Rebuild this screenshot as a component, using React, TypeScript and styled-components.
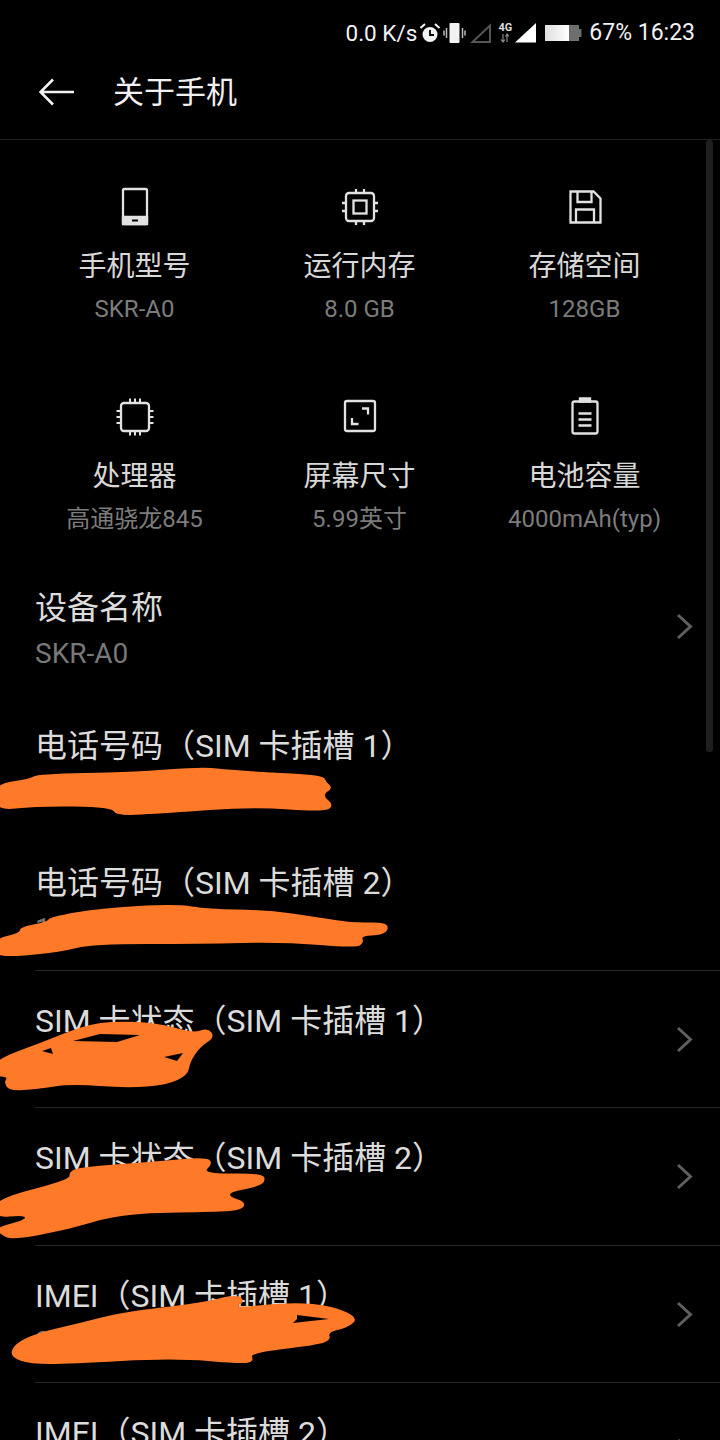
import React from "react";
import styled, { createGlobalStyle } from "styled-components";

const GlobalStyle = createGlobalStyle`
  html, body {
    margin: 0;
    padding: 0;
    background: #000;
  }
  body {
    font-family: Roboto, "Noto Sans CJK SC", sans-serif;
  }
`;

const Page = styled.div`
  position: relative;
  width: 720px;
  height: 1440px;
  overflow: hidden;
  background: #000;
`;

const StatusBar = styled.div`
  height: 48px;
  padding: 17px 25px 0 0;
  box-sizing: border-box;
  display: flex;
  align-items: center;
  justify-content: flex-end;
  color: #f2f2f2;
`;

const StatusText = styled.span<{ $left?: number; $size: number }>`
  margin-left: ${(p) => p.$left ?? 0}px;
  font-size: ${(p) => p.$size}px;
  line-height: 28px;
  white-space: nowrap;
`;

const StatusIcon = styled.svg<{ $left?: number }>`
  display: block;
  flex: none;
  margin-left: ${(p) => p.$left ?? 0}px;
`;

const NetStack = styled.div`
  width: 14px;
  margin-left: 7px;
  display: flex;
  flex-direction: column;
  align-items: center;
`;

const NetLabel = styled.span`
  font-size: 11px;
  font-weight: 700;
  line-height: 10px;
  color: #ddd;
`;

const Toolbar = styled.header`
  height: 92px;
  box-sizing: border-box;
  padding: 0 0 8px 39px;
  display: flex;
  align-items: center;
  border-bottom: 1px solid #222;
`;

const BackIcon = styled.svg`
  display: block;
  flex: none;
  margin: 4px 38px 0 0;
`;

const PageTitle = styled.h1`
  margin: 0;
  font-size: 31px;
  font-weight: 400;
  color: #f0f0f0;
`;

const SpecGrid = styled.section`
  height: 417px;
  box-sizing: border-box;
  padding: 0 22px;
  display: grid;
  grid-template-columns: repeat(3, 225px);
  grid-auto-rows: 210px;
`;

const SpecCell = styled.div`
  padding-top: 44px;
  display: flex;
  flex-direction: column;
  align-items: center;
`;

const SpecIcon = styled.svg`
  display: block;
  width: 44px;
  height: 44px;
  fill: none;
  stroke: #e2e2e2;
  stroke-width: 2.3;
`;

const SpecLabel = styled.div`
  margin-top: 21px;
  font-size: 28px;
  line-height: 36px;
  color: #d8d8d8;
`;

const SpecValue = styled.div`
  margin-top: 8px;
  font-size: 24px;
  line-height: 32px;
  color: #7c7c7c;
  white-space: nowrap;
`;

const InfoRow = styled.div<{ $divided?: boolean }>`
  position: relative;
  height: 137.5px;
  box-sizing: border-box;
  margin-left: 35px;
  padding-top: 29px;
  border-top: 1px solid ${(p) => (p.$divided ? "#262626" : "transparent")};
`;

const RowTitle = styled.div`
  font-size: 32px;
  line-height: 42px;
  color: #dcdcdc;
  white-space: nowrap;
`;

const RowValue = styled.div`
  margin-top: 3px;
  font-size: 28px;
  line-height: 44px;
  color: #787878;
`;

const Chevron = styled.svg`
  position: absolute;
  right: 27px;
  top: 55px;
  width: 17px;
  height: 27px;
  fill: none;
  stroke: #5f5f5f;
  stroke-width: 3;
`;

const ScrollThumb = styled.div`
  position: absolute;
  left: 706px;
  top: 140px;
  width: 7px;
  height: 612px;
  border-radius: 3px;
  background: #1f1f1f;
`;

const Scribbles = styled.svg`
  position: absolute;
  left: 0;
  top: 0;
  pointer-events: none;
`;

type Pt = [number, number];

// closed outline, smoothed through the midpoints so the marker edge stays soft
const smooth = (pts: Pt[]) => {
  const mid = (a: Pt, b: Pt): Pt => [(a[0] + b[0]) / 2, (a[1] + b[1]) / 2];
  const start = mid(pts[pts.length - 1], pts[0]);
  let d = `M${start[0]} ${start[1]}`;
  pts.forEach((p, i) => {
    const m = mid(p, pts[(i + 1) % pts.length]);
    d += `Q${p[0]} ${p[1]} ${m[0]} ${m[1]}`;
  });
  return d + "Z";
};

const marks: Pt[][] = [
  [
    [-6, 784], [30, 779], [37, 774], [133, 772], [200, 767], [222, 769], [260, 772], [323, 775], [326, 782],
    [333, 788], [322, 795], [334, 805], [325, 812], [253, 807], [167, 813], [116, 816], [112, 807], [37, 806], [-6, 811]
  ],
  [
    [-6, 939], [20, 933], [20, 927], [47, 922], [50, 917], [100, 908], [177, 904], [207, 909], [267, 910], [317, 917],
    [353, 923], [385, 922], [389, 929], [382, 935], [361, 936], [364, 942], [357, 948], [283, 942], [200, 944],
    [93, 944], [60, 952], [10, 957], [-6, 954]
  ],
  [
    [-6, 1060], [43, 1042], [90, 1023], [133, 1021], [167, 1025], [193, 1033], [208, 1028], [215, 1037], [200, 1047],
    [190, 1062], [188, 1075], [167, 1085], [127, 1088], [72, 1084], [37, 1089], [9, 1091], [4, 1082], [8, 1077], [-6, 1076]
  ],
  [
    [-6, 1199], [70, 1180], [69, 1172], [80, 1167], [150, 1162], [206, 1157], [213, 1163], [202, 1174], [262, 1173],
    [266, 1181], [257, 1187], [230, 1192], [230, 1197], [246, 1202], [241, 1211], [200, 1212], [120, 1214],
    [67, 1230], [12, 1240], [2, 1235], [-6, 1228], [25, 1220], [25, 1215], [-6, 1218]
  ],
  [
    [10, 1357], [14, 1344], [37, 1333], [80, 1323], [123, 1312], [200, 1303], [238, 1294], [245, 1302], [233, 1308],
    [293, 1302], [333, 1306], [359, 1318], [347, 1328], [328, 1332], [331, 1340], [317, 1345], [250, 1353], [254, 1361],
    [243, 1364], [173, 1358], [70, 1364], [30, 1364]
  ]
];

const holes = [
  "73,1041 117,1042 140,1035 100,1034",
  "164,1057 177,1061 183,1053",
  "42,1051 51,1048 53,1054",
  "297,1315 329,1319 293,1323 297,1319"
];

const PhoneGlyph = () => (
  <SpecIcon viewBox="0 0 44 44">
    <rect x="10" y="5" width="24" height="35" rx="1.500" />
    <path d="M10 33h24v7H10z" fill="#e2e2e2" />
    <rect x="19" y="35.500" width="6" height="2" fill="#000" stroke="none" />
  </SpecIcon>
);

const RamGlyph = () => (
  <SpecIcon viewBox="0 0 44 44">
    <rect x="8" y="9" width="28" height="28" rx="3" />
    <rect x="15.500" y="16.500" width="13" height="13" />
    <path d="M18 5v4M26 5v4M18 37v4M26 37v4M4 19h4M4 27h4M36 19h4M36 27h4" />
  </SpecIcon>
);

const DiskGlyph = () => (
  <SpecIcon viewBox="0 0 44 44">
    <path d="M7.500 7.500h23l7 7v24h-30z" />
    <path d="M14.500 8v10h14V8M13 38V25.500h18V38" />
  </SpecIcon>
);

const ChipGlyph = () => (
  <SpecIcon viewBox="0 0 44 44">
    <rect x="8" y="9" width="28" height="28" rx="3" />
    <path d="M17 4.500V9M22 4.500V9M27 4.500V9M17 37v4.500M22 37v4.500M27 37v4.500M3.500 17H8M3.500 23H8M3.500 29H8M36 17h4.500M36 23h4.500M36 29h4.500" strokeWidth="2" />
  </SpecIcon>
);

const ScreenGlyph = () => (
  <SpecIcon viewBox="0 0 44 44">
    <rect x="7" y="7" width="30" height="30" rx="2" />
    <path d="M24 14.500h6v6M14 24v6h6.500" />
  </SpecIcon>
);

const BatteryGlyph = () => (
  <SpecIcon viewBox="0 0 44 44">
    <rect x="9.500" y="7.500" width="25" height="32" rx="2" />
    <path d="M17 4.500h10v3H17z" fill="#e2e2e2" />
    <path d="M15.500 19.500h13M15.500 25.500h13M15.500 31.500h13" />
  </SpecIcon>
);

const specs = [
  { icon: <PhoneGlyph />, label: "手机型号", value: "SKR-A0" },
  { icon: <RamGlyph />, label: "运行内存", value: "8.0 GB" },
  { icon: <DiskGlyph />, label: "存储空间", value: "128GB" },
  { icon: <ChipGlyph />, label: "处理器", value: "高通骁龙845" },
  { icon: <ScreenGlyph />, label: "屏幕尺寸", value: "5.99英寸" },
  { icon: <BatteryGlyph />, label: "电池容量", value: "4000mAh(typ)" }
];

const rows = [
  { title: "设备名称", value: "SKR-A0", more: true },
  { title: "电话号码（SIM 卡插槽 1）", value: "1" },
  { title: "电话号码（SIM 卡插槽 2）", value: "1" },
  { title: "SIM 卡状态（SIM 卡插槽 1）", value: "1", more: true, divided: true },
  { title: "SIM 卡状态（SIM 卡插槽 2）", value: "1", more: true, divided: true },
  { title: "IMEI（SIM 卡插槽 1）", value: "8", more: true, divided: true },
  { title: "IMEI（SIM 卡插槽 2）", value: "8", more: true, divided: true }
];

const App = () => {
  return (
    <Page>
      <GlobalStyle />
      <StatusBar>
        <StatusText $size={22.5}>0.0 K/s</StatusText>
        <StatusIcon $left={3} width="20" height="22" viewBox="0 0 20 22">
          <circle cx="10" cy="12.500" r="7.500" fill="#f2f2f2" />
          <path d="M10 8v5h4" fill="none" stroke="#000" strokeWidth="1.800" />
          <path d="M.5 6 5 2M19.500 6 15 2" stroke="#f2f2f2" strokeWidth="2" />
        </StatusIcon>
        <StatusIcon $left={3} width="23" height="22" viewBox="0 0 23 22">
          <rect x="6.500" y="1" width="10" height="20" rx="1" fill="#f2f2f2" />
          <path d="M3.500 6v10M1 8.500v5M19.500 6v10M22 8.500v5" stroke="#bbb" strokeWidth="1.500" />
        </StatusIcon>
        <StatusIcon $left={4} width="21" height="20" viewBox="0 0 21 20">
          <path d="M2.500 19 20 2.500V19z" fill="none" stroke="#555" strokeWidth="2" />
        </StatusIcon>
        <NetStack>
          <NetLabel>4G</NetLabel>
          <StatusIcon width="10" height="10" viewBox="0 0 10 10">
            <path d="M3 1v8M1 6.500l2 2.500 2-2.500M7 9V1M5.500 3.500 7 1l2 2.500" fill="none" stroke="#888" strokeWidth="1.200" />
          </StatusIcon>
        </NetStack>
        <StatusIcon $left={3} width="21" height="20" viewBox="0 0 21 20">
          <path d="M0 19.500 21 0v19.500z" fill="#fff" />
        </StatusIcon>
        <StatusIcon $left={9} width="37" height="18" viewBox="0 0 37 18">
          <defs>
            <linearGradient id="charge" x1="0" x2="1" y1="0" y2="0">
              <stop offset="0" stopColor="#dedede" />
              <stop offset="1" stopColor="#fff" />
            </linearGradient>
          </defs>
          <rect x="0" y="1" width="24" height="16" fill="url(#charge)" />
          <path d="M24 1h10v16H24zM34 5h2.500v8H34z" fill="#6e6e6e" />
        </StatusIcon>
        <StatusText $left={7} $size={23}>67% 16:23</StatusText>
      </StatusBar>

      <Toolbar>
        <BackIcon width="36" height="28" viewBox="0 0 36 28">
          <path d="M35 14H2M14 1.500 1.500 14 14 26.500" fill="none" stroke="#f2f2f2" strokeWidth="2.600" />
        </BackIcon>
        <PageTitle>关于手机</PageTitle>
      </Toolbar>

      <SpecGrid>
        {specs.map((spec) => (
          <SpecCell key={spec.label}>
            {spec.icon}
            <SpecLabel>{spec.label}</SpecLabel>
            <SpecValue>{spec.value}</SpecValue>
          </SpecCell>
        ))}
      </SpecGrid>

      {rows.map((row) => (
        <InfoRow key={row.title} $divided={row.divided}>
          <RowTitle>{row.title}</RowTitle>
          <RowValue>{row.value}</RowValue>
          {row.more && (
            <Chevron viewBox="0 0 17 27">
              <path d="M2 2l12.500 11.500L2 25" />
            </Chevron>
          )}
        </InfoRow>
      ))}

      <ScrollThumb />

      <Scribbles width="720" height="1440" viewBox="0 0 720 1440">
        {marks.map((m, i) => (
          <path key={i} d={smooth(m)} fill="#ff7a28" />
        ))}
        {holes.map((h) => (
          <polygon key={h} points={h} fill="#000" />
        ))}
      </Scribbles>
    </Page>
  );
};

export default App;
